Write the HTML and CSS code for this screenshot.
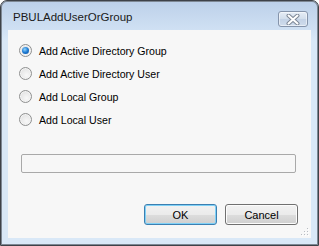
FILE: index.html
```html
<!DOCTYPE html>
<html lang="en">
<head>
    <meta charset="UTF-8">
    <title>PBULAddUserOrGroup</title>
    <link rel="stylesheet" href="styles.css">
</head>
<body>
    <div class="window">
        <div class="titlebar">
            <span class="title">PBULAddUserOrGroup</span>
            <button class="close-button" aria-label="Close">
                <svg width="14" height="11" viewBox="0 0 14 11">
                    <path d="M2.5 1.5 L11.5 9.5 M11.5 1.5 L2.5 9.5" stroke="#7d8796" stroke-width="4" stroke-linecap="round"/>
                    <path d="M2.5 1.5 L11.5 9.5 M11.5 1.5 L2.5 9.5" stroke="#ffffff" stroke-width="2" stroke-linecap="round"/>
                </svg>
            </button>
        </div>
        <div class="client">
            <div class="options">
                <label class="option"><span class="radio checked"></span>Add Active Directory Group</label>
                <label class="option"><span class="radio"></span>Add Active Directory User</label>
                <label class="option"><span class="radio"></span>Add Local Group</label>
                <label class="option"><span class="radio"></span>Add Local User</label>
            </div>
            <div class="textbox"></div>
            <div class="buttons">
                <button class="btn default">OK</button>
                <button class="btn">Cancel</button>
            </div>
            <svg class="grip" width="8" height="8" viewBox="0 0 8 8">
                <rect x="7" y="1" width="1" height="1" fill="#fff"/>
                <rect x="4" y="4" width="1" height="1" fill="#fff"/>
                <rect x="7" y="4" width="1" height="1" fill="#fff"/>
                <rect x="1" y="7" width="1" height="1" fill="#fff"/>
                <rect x="4" y="7" width="1" height="1" fill="#fff"/>
                <rect x="7" y="7" width="1" height="1" fill="#fff"/>
                <rect x="6" y="0" width="1" height="1" fill="#b8bcc2"/>
                <rect x="3" y="3" width="1" height="1" fill="#b8bcc2"/>
                <rect x="6" y="3" width="1" height="1" fill="#b8bcc2"/>
                <rect x="0" y="6" width="1" height="1" fill="#b8bcc2"/>
                <rect x="3" y="6" width="1" height="1" fill="#b8bcc2"/>
                <rect x="6" y="6" width="1" height="1" fill="#b8bcc2"/>
            </svg>
        </div>
    </div>
</body>
</html>
```
FILE: styles.css
```css
body {
    margin: 0;
    background: #fff;
    font-family: "Liberation Sans", Arial, sans-serif;
}
.window {
    width: 319px;
    height: 246px;
    box-sizing: border-box;
    display: flex;
    flex-direction: column;
    padding: 0 7px 7px 7px;
    border: 1px solid #3e4248;
    border-radius: 7px 7px 0 0;
    box-shadow: inset 0 0 0 1px #7e8894;
    background: linear-gradient(#bcd0e9, #cfe0f3 28px, #d9e8f7 40px);
}
.titlebar {
    height: 29px;
    display: flex;
    align-items: flex-start;
    justify-content: space-between;
}
.title {
    margin: 10px 0 0 5px;
    font-size: 11.5px;
    color: #1a1a1a;
}
.close-button {
    width: 30px;
    height: 16px;
    margin: 10px 3px 0 0;
    padding: 0;
    border: 1px solid #8594ab;
    border-radius: 3px;
    background: linear-gradient(#e6edf6, #d2deec 50%, #c3d2e6 51%, #cfdcec);
    box-shadow: inset 0 0 0 1px rgba(255, 255, 255, 0.5);
    display: flex;
    align-items: center;
    justify-content: center;
}
.client {
    flex: 1;
    position: relative;
    background: #f7f7f7;
    display: flex;
    flex-direction: column;
    font-size: 10.6px;
    color: #000;
}
.options {
    padding: 9px 0 0 11px;
    display: flex;
    flex-direction: column;
}
.option {
    height: 23px;
    display: flex;
    align-items: center;
    gap: 7px;
}
.radio {
    width: 11px;
    height: 11px;
    border: 1px solid #8f9090;
    border-radius: 50%;
    background: radial-gradient(circle at 60% 65%, #f8f8f8, #dcdcdc);
    box-shadow: inset 0 0 0 1px #f4f4f4;
    display: flex;
    align-items: center;
    justify-content: center;
}
.radio.checked::after {
    content: "";
    width: 7px;
    height: 7px;
    border-radius: 50%;
    background: radial-gradient(circle at 40% 35%, #8fd5ff, #1e7ad2 50%, #0b4b98);
}
.textbox {
    margin: 23px 15px 0 13px;
    height: 19px;
    box-sizing: border-box;
    border: 1px solid #a9a9a9;
    border-radius: 2px;
    background: #f7f7f7;
}
.buttons {
    margin: 31px 13px 0 0;
    display: flex;
    justify-content: flex-end;
    gap: 8px;
}
.btn {
    width: 73px;
    height: 21px;
    padding: 0;
    border: 1px solid #707070;
    border-radius: 3px;
    background: linear-gradient(#f2f2f2, #ebebeb 50%, #dddddd 51%, #cfcfcf);
    box-shadow: inset 0 0 0 1px #fcfcfc;
    font-family: "Liberation Sans", Arial, sans-serif;
    font-size: 11px;
    color: #000;
}
.btn.default {
    border-color: #3c7fb1;
    box-shadow: inset 0 0 0 1px #7fd1f7;
}
.grip {
    position: absolute;
    right: 2px;
    bottom: 2px;
}
```
